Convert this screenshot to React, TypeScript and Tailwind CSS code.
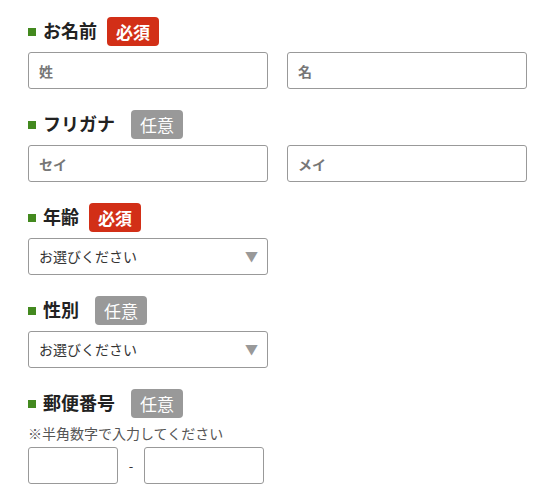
import React from "react";

const font = { fontFamily: '"Noto Sans CJK JP", "Noto Sans", sans-serif' };

function Badge({ required }: { required: boolean }) {
  return required ? (
    <span className="ml-[10px] inline-flex h-[29px] items-center rounded-[4px] bg-[#d22f17] px-[9px] text-[17px] font-bold leading-none text-white">
      必須
    </span>
  ) : (
    <span className="ml-[16px] inline-flex h-[29px] items-center rounded-[4px] bg-[#999999] px-[9px] text-[17px] leading-none text-white">
      任意
    </span>
  );
}

function Label({ text, required }: { text: string; required: boolean }) {
  return (
    <div className="flex h-[29px] items-center">
      <span className="mr-[7px] h-[8px] w-[8px] bg-[#43891f]" />
      <span className="pb-[3px] text-[18px] font-bold leading-none text-[#222]">{text}</span>
      <Badge required={required} />
    </div>
  );
}

function TextInput({ placeholder, className = "w-[240px]" }: { placeholder?: string; className?: string }) {
  return (
    <input
      type="text"
      placeholder={placeholder}
      className={`h-[37px] rounded-[3px] border border-[#999] bg-white px-[10px] text-[14px] font-bold outline-none placeholder:text-[#777] ${className}`}
      style={font}
    />
  );
}

function Select() {
  return (
    <div className="relative h-[37px] w-[240px] rounded-[3px] border border-[#999] bg-white">
      <div className="flex h-full items-center px-[10px] text-[14px] text-[#333]">お選びください</div>
      <span className="absolute right-[9px] top-[10px] text-[13px] leading-none text-[#999]">▼</span>
    </div>
  );
}

export default function App() {
  return (
    <div className="min-h-[502px] w-[548px] bg-white pl-[28px] pt-[17px]" style={font}>
      <div className="flex flex-col gap-[21px]">
        <div className="flex flex-col gap-[6px]">
          <Label text="お名前" required />
          <div className="flex gap-[19px]">
            <TextInput placeholder="姓" />
            <TextInput placeholder="名" />
          </div>
        </div>

        <div className="flex flex-col gap-[6px]">
          <Label text="フリガナ" required={false} />
          <div className="flex gap-[19px]">
            <TextInput placeholder="セイ" />
            <TextInput placeholder="メイ" />
          </div>
        </div>

        <div className="flex flex-col gap-[6px]">
          <Label text="年齢" required />
          <Select />
        </div>

        <div className="flex flex-col gap-[6px]">
          <Label text="性別" required={false} />
          <Select />
        </div>

        <div className="flex flex-col">
          <Label text="郵便番号" required={false} />
          <p className="mt-[3px] text-[14px] leading-[24px] text-[#555]">※半角数字で入力してください</p>
          <div className="mt-[2px] flex items-center">
            <TextInput className="w-[90px]" />
            <span className="mx-[10px] w-[6px] text-center text-[13px] text-[#333]">-</span>
            <TextInput className="w-[120px]" />
          </div>
        </div>
      </div>
    </div>
  );
}
